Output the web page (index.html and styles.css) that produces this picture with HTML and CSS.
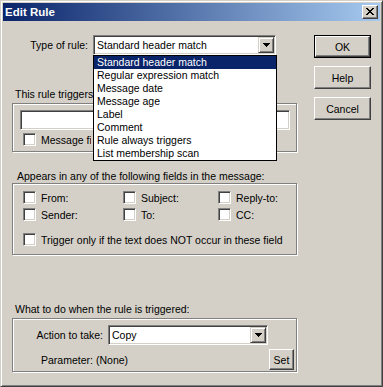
FILE: index.html
```html
<!DOCTYPE html>
<html lang="en">
<head>
    <meta charset="UTF-8">
    <meta name="viewport" content="width=device-width, initial-scale=1.0">
    <title>Edit Rule</title>
    <link rel="stylesheet" href="styles.css">
</head>
<body>
    <div class="window">
        <div class="titlebar">
            <span class="title">Edit Rule</span>
            <span class="close-btn">
                <svg width="8" height="7" viewBox="0 0 8 7" shape-rendering="crispEdges">
                    <path d="M0 0h2v1h1v1h2v-1h1v-1h2v1h-1v1h-1v1h-1v1h1v1h1v1h1v1h-2v-1h-1v-1h-2v1h-1v1h-2v-1h1v-1h1v-1h1v-1h-1v-1h-1v-1h-1z"/>
                </svg>
            </span>
        </div>

        <div class="dialog">
            <div class="main">
                <div class="type-row">
                    <span class="type-label">Type of rule:</span>
                    <div class="combo combo-type">
                        <span class="combo-text">Standard header match</span>
                        <span class="combo-btn"><svg width="7" height="4" viewBox="0 0 7 4" shape-rendering="crispEdges"><path d="M0 0h7v1h-1v1h-1v1h-1v1h-1v-1h-1v-1h-1v-1h-1z"/></svg></span>

                        <!-- open list of the combo, lies over the form -->
                        <ul class="drop-list">
                            <li class="selected">Standard header match</li>
                            <li>Regular expression match</li>
                            <li>Message date</li>
                            <li>Message age</li>
                            <li>Label</li>
                            <li>Comment</li>
                            <li>Rule always triggers</li>
                            <li>List membership scan</li>
                        </ul>
                    </div>
                </div>

                <!-- these two texts run under the open list, so they are cut at its edge -->
                <div class="caption caption-cut">This rule triggers</div>
                <div class="group group-text">
                    <div class="textbox"></div>
                    <div class="check-row"><span class="check"></span><span class="check-cut">Message field</span></div>
                </div>

                <div class="caption caption-wide">Appears in any of the following fields in the message:</div>
                <div class="group group-fields">
                    <div class="field-grid">
                        <div class="check-row"><span class="check"></span>From:</div>
                        <div class="check-row"><span class="check"></span>Subject:</div>
                        <div class="check-row"><span class="check"></span>Reply-to:</div>
                        <div class="check-row"><span class="check"></span>Sender:</div>
                        <div class="check-row"><span class="check"></span>To:</div>
                        <div class="check-row"><span class="check"></span>CC:</div>
                    </div>
                    <div class="check-row check-not"><span class="check"></span>Trigger only if the text does NOT occur in these field</div>
                </div>

                <div class="caption caption-action">What to do when the rule is triggered:</div>
                <div class="group group-action">
                    <div class="action-row">
                        <span class="action-label">Action to take:</span>
                        <div class="combo combo-action">
                            <span class="combo-text">Copy</span>
                            <span class="combo-btn"><svg width="7" height="4" viewBox="0 0 7 4" shape-rendering="crispEdges"><path d="M0 0h7v1h-1v1h-1v1h-1v1h-1v-1h-1v-1h-1v-1h-1z"/></svg></span>
                        </div>
                    </div>
                    <div class="param-row">
                        <span class="param-label">Parameter:</span>
                        <span>(None)</span>
                        <span class="btn btn-set">Set</span>
                    </div>
                </div>
            </div>

            <div class="buttons">
                <div class="btn btn-default"><span class="btn-face">OK</span></div>
                <div class="btn">Help</div>
                <div class="btn">Cancel</div>
            </div>
        </div>
    </div>
</body>
</html>
```

FILE: styles.css
```css
/* basic reset */
html, body {
    margin: 0;
    padding: 0;
}

body {
    width: 383px;
    height: 387px;
    font-family: "Liberation Sans", Arial, sans-serif;
    font-size: 10.5px;
    color: #000;
    background: #d4d0c8;
}

/* outer frame of the dialog */
.window {
    position: relative;
    box-sizing: border-box;
    width: 383px;
    height: 387px;
    padding: 2px;
    background: #d4d0c8;
    border: 1px solid;
    border-color: #d4d0c8 #404040 #404040 #d4d0c8;
    box-shadow: inset 1px 1px #fff, inset -1px -1px #808080;
}

.titlebar {
    display: flex;
    align-items: center;
    height: 18px;
    padding-left: 2px;
    background: linear-gradient(to right, #0a246a, #a6caf0);
}

.title {
    flex: 1;
    color: #fff;
    font-weight: bold;
    font-size: 11.5px;
}

.close-btn {
    display: flex;
    box-sizing: border-box;
    width: 16px;
    height: 14px;
    margin-right: 2px;
    padding: 3px 0 0 4px;
    background: #d4d0c8;
    border: 1px solid;
    border-color: #fff #404040 #404040 #fff;
    box-shadow: inset -1px -1px #808080;
}

.close-btn svg {
    margin: -1px 0 0 -1px;
}

.dialog {
    display: flex;
}

.main {
    width: 297px;
}

/* type of rule combo row */
.type-row {
    display: flex;
    align-items: center;
    height: 20px;
    margin-top: 14px;
}

.type-label {
    width: 85px;
    margin-right: 5px;
    text-align: right;
}

/* sunken fields */
.combo, .textbox {
    box-sizing: border-box;
    background: #fff;
    border: 1px solid;
    border-color: #808080 #fff #fff #808080;
    box-shadow: inset 1px 1px #404040, inset -1px -1px #d4d0c8;
}

.combo {
    position: relative;
    display: flex;
    height: 20px;
    padding: 1px;
}

.combo-text {
    flex: 1;
    line-height: 16px;
    padding-left: 2px;
}

.combo-btn {
    display: flex;
    align-items: center;
    justify-content: center;
    box-sizing: border-box;
    width: 16px;
    height: 16px;
    background: #d4d0c8;
    border: 1px solid;
    border-color: #d4d0c8 #404040 #404040 #d4d0c8;
    box-shadow: inset 1px 1px #fff, inset -1px -1px #808080;
}

.combo-type {
    width: 183px;
}

.drop-list {
    position: absolute;
    top: 19px;
    left: -1px;
    z-index: 2;
    box-sizing: border-box;
    width: 184px;
    margin: 0;
    padding: 0;
    list-style: none;
    background: #fff;
    border: 1px solid #000;
}

.drop-list li {
    height: 13px;
    line-height: 13px;
    padding-left: 3px;
}

.drop-list .selected {
    background: #0a246a;
    color: #fff;
}

/* captions above the group boxes */
.caption {
    line-height: 13px;
    margin-top: 33px;
    padding-left: 12px;
}

.caption-cut {
    width: 78px;
    overflow: hidden;
    white-space: nowrap;
}

.check-cut {
    width: 50px;
    overflow: hidden;
    white-space: nowrap;
}

.caption-wide {
    margin-top: 18px;
    padding-left: 14px;
}

.caption-action {
    margin-top: 48px;
}

/* etched group box */
.group {
    box-sizing: border-box;
    width: 285px;
    margin-left: 9px;
    margin-top: 2px;
    border: 1px solid #808080;
    box-shadow: inset 1px 1px #fff, 1px 1px #fff;
}

.caption-wide + .group {
    margin-top: 0;
}

.group-text {
    padding: 6px 0 5px 7px;
}

.textbox {
    width: 270px;
    height: 20px;
}

.check-row {
    display: flex;
    align-items: center;
    height: 13px;
}

.group-text .check-row {
    margin-top: 3px;
    padding-left: 3px;
}

.check {
    flex: none;
    box-sizing: border-box;
    width: 13px;
    height: 13px;
    margin-right: 5px;
    background: #fff;
    border: 1px solid;
    border-color: #808080 #fff #fff #808080;
    box-shadow: inset 1px 1px #404040, inset -1px -1px #d4d0c8;
}

.group-fields {
    padding: 7px 0 8px 10px;
}

.field-grid {
    display: grid;
    grid-template-columns: 100px 95px 1fr;
    row-gap: 4px;
}

.check-not {
    margin-top: 12px;
}

.group-action {
    padding: 6px 2px 1px 0;
}

.action-row {
    display: flex;
    align-items: center;
}

.action-label {
    width: 90px;
    margin-right: 5px;
    text-align: right;
}

.combo-action {
    width: 160px;
}

.param-row {
    display: flex;
    align-items: center;
    margin-top: 4px;
    padding-left: 28px;
}

.param-label {
    width: 55px;
}

/* raised buttons */
.btn {
    display: flex;
    align-items: center;
    justify-content: center;
    box-sizing: border-box;
    width: 57px;
    height: 23px;
    margin-top: 8px;
    background: #d4d0c8;
    border: 1px solid;
    border-color: #fff #404040 #404040 #fff;
    box-shadow: inset -1px -1px #808080;
}

.buttons {
    padding: 6px 0 0 14px;
}

.btn-default {
    padding: 0;
    border: 1px solid #000;
    box-shadow: none;
}

.btn-face {
    display: flex;
    align-items: center;
    justify-content: center;
    box-sizing: border-box;
    width: 100%;
    height: 100%;
    border: 1px solid;
    border-color: #fff #404040 #404040 #fff;
    box-shadow: inset -1px -1px #808080;
}

.btn-set {
    width: 25px;
    height: 21px;
    margin: 0 0 0 auto;
}
```
